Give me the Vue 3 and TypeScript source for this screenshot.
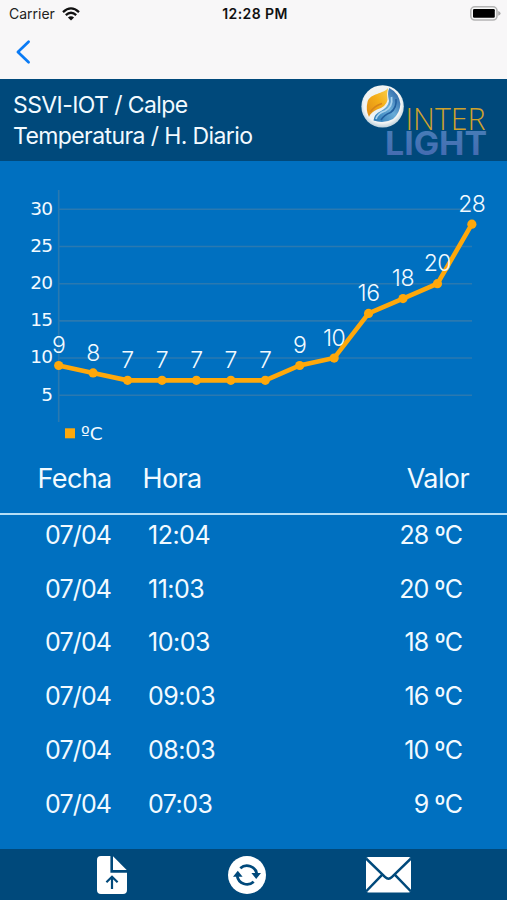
<script setup lang="ts">
interface Reading {
  date: string
  time: string
  value: number
}

const series: number[] = [9, 8, 7, 7, 7, 7, 7, 9, 10, 16, 18, 20, 28]
const ticks: number[] = [30, 25, 20, 15, 10, 5]

const left = 58.7
const step = 34.43
const px = (i: number): number => left + i * step
const py = (v: number): number => 271.4 - v * 7.436
const line: string = series.map((v, i) => `${px(i)},${py(v)}`).join(' ')

const readings: Reading[] = [
  { date: '07/04', time: '12:04', value: 28 },
  { date: '07/04', time: '11:03', value: 20 },
  { date: '07/04', time: '10:03', value: 18 },
  { date: '07/04', time: '09:03', value: 16 },
  { date: '07/04', time: '08:03', value: 10 },
  { date: '07/04', time: '07:03', value: 9 },
]
</script>

<template>
  <div class="screen">
    <div class="top">
      <div class="status">
        <div class="carrier">
          <span>Carrier</span>
          <svg class="wifi" width="18" height="14" viewBox="0 0 18 14">
            <path d="M1 5.1Q9-2.4 17 5.1" />
            <path d="M3.8 8.1Q9 3.3 14.2 8.1" />
            <path class="dot" d="M9 13.6L5.9 10.5Q9 7.9 12.1 10.5Z" />
          </svg>
        </div>
        <span class="clock">12:28 PM</span>
        <svg class="battery" width="31" height="15" viewBox="0 0 31 15">
          <rect x=".8" y=".8" width="26.2" height="13.2" rx="4" fill="#f8f8f8" stroke="#b4b4b4" stroke-width="1.6" />
          <rect x="3" y="3" width="21.8" height="8.8" rx="1.2" fill="#000" />
          <path d="M28.2 5Q30.6 6 30.6 7.4T28.2 9.8Z" fill="#aaa" />
        </svg>
      </div>
      <nav class="nav">
        <svg width="16" height="26" viewBox="0 0 16 26">
          <path d="M13.6 2.7L2.9 13L13.6 23.3" fill="none" stroke="#0a7bf5" stroke-width="2.7" stroke-linecap="round" stroke-linejoin="round" />
        </svg>
      </nav>
    </div>

    <header class="header">
      <div class="titles">
        <div>SSVI-IOT / Calpe</div>
        <div>Temperatura / H. Diario</div>
      </div>
      <svg class="logo" width="130" height="80" viewBox="0 0 130 80">
        <defs>
          <radialGradient id="ball" cx=".5" cy=".45" r=".55">
            <stop offset="0" stop-color="#e4edf2" />
            <stop offset=".8" stop-color="#f3f5f4" />
            <stop offset="1" stop-color="#b9cfdb" />
          </radialGradient>
          <linearGradient id="flame" x1="0" y1="1" x2="1" y2="0">
            <stop offset="0" stop-color="#df8b16" />
            <stop offset=".55" stop-color="#f4ae18" />
            <stop offset="1" stop-color="#f9cf4a" />
          </linearGradient>
          <linearGradient id="wave" x1="0" y1="1" x2="1" y2="0">
            <stop offset="0" stop-color="#2878b5" />
            <stop offset=".5" stop-color="#69abd7" />
            <stop offset="1" stop-color="#1f579c" />
          </linearGradient>
          <linearGradient id="steel" x1="0" y1="0" x2="0" y2="1">
            <stop offset="0" stop-color="#4880b8" />
            <stop offset="1" stop-color="#4467b0" />
          </linearGradient>
        </defs>
        <circle cx="25.6" cy="27.4" r="21.2" fill="url(#ball)" />
        <path d="M31 9C27 15 13 14 10.5 23Q8.5 31 12 38Q14 33 20 30.5Q29 28 30.5 21Q29.5 14 31 9Z" fill="url(#flame)" />
        <path d="M16.5 41.5Q17 35 24 32Q31 28 32 22Q30 14 32.3 9Q42 14 43.4 25Q43 34 36 40Q27 45 16.5 41.5Z" fill="url(#wave)" />
        <path d="M19 40Q21 34 28 32Q36 28 34.5 18" fill="none" stroke="#a9d3ee" stroke-width="1.8" />
        <path d="M24 41Q27 36 33.5 33.5Q40 29 39 20" fill="none" stroke="#215f9f" stroke-width="1.6" />
        <path d="M13.5 33Q17 27 25 24.5" fill="none" stroke="#d8841a" stroke-width="1.6" />
        <text class="inter" x="48.5" y="51" textLength="80" lengthAdjust="spacingAndGlyphs">INTER</text>
        <text class="light" x="28" y="76" textLength="102" lengthAdjust="spacingAndGlyphs">LIGHT</text>
      </svg>
    </header>

    <section class="chart">
      <svg width="507" height="290" viewBox="0 0 507 290">
        <g class="grid">
          <line :x1="left" :x2="left" y1="29" y2="261" />
          <line v-for="t in ticks" :key="t" :x1="left" x2="472" :y1="py(t)" :y2="py(t)" />
        </g>
        <text v-for="t in ticks" :key="t" class="tick" x="52.3" :y="py(t) + 5.4">{{ t }}</text>
        <polyline class="line" :points="line" />
        <circle v-for="(v, i) in series" :key="i" class="point" :cx="px(i)" :cy="py(v)" r="4.6" />
        <text v-for="(v, i) in series" :key="i" class="label" :x="px(i)" :y="py(v) - 12.4">{{ v }}</text>
        <rect x="65" y="267.3" width="10" height="10" fill="#ffa80a" />
        <text class="legend" x="81" y="279.4">ºC</text>
      </svg>
    </section>

    <div class="row head">
      <span>Fecha</span><span>Hora</span><span>Valor</span>
    </div>
    <main class="list">
      <div v-for="r in readings" :key="r.time" class="row">
        <span class="date">{{ r.date }}</span><span class="time">{{ r.time }}</span><span class="value">{{ r.value }} ºC</span>
      </div>
    </main>

    <footer class="footer">
      <svg class="file" width="30" height="38" viewBox="0 0 30 38">
        <path d="M4 0H13.4V16.7H30V34Q30 38 26 38H4Q0 38 0 34V4Q0 0 4 0Z" fill="#fff" />
        <path d="M16 0.2L29.7 14.1H16Z" fill="#fff" />
        <path d="M15 33V21.2M9.4 26.2L15 20.7L20.6 26.2" fill="none" stroke="#00497b" stroke-width="2.2" />
      </svg>
      <svg class="sync" width="38" height="38" viewBox="0 0 38 38">
        <circle cx="19" cy="19" r="19" fill="#fff" />
        <path d="M12.3 12.2A10 10 0 0 1 28.8 18M25.7 25.8A10 10 0 0 1 9.2 20" fill="none" stroke="#00497b" stroke-width="2.8" />
        <path d="M23.4 17.1H33L28.2 23.1ZM5 20.7L9.8 14.7L14.6 20.7Z" fill="#00497b" />
      </svg>
      <svg class="mail" width="45" height="36" viewBox="0 0 45 36">
        <rect width="45" height="35.5" rx="2.5" fill="#fff" />
        <path d="M0 1.5L19.2 20.2Q22.5 23.3 25.8 20.2L45 1.5M0 34.5L15.8 18.2M45 34.5L29.2 18.2" fill="none" stroke="#00497b" stroke-width="2.5" />
      </svg>
    </footer>
  </div>
</template>

<style>
body {
  margin: 0;
}
</style>

<style scoped>
.screen {
  display: flex;
  flex-direction: column;
  width: 507px;
  height: 900px;
  overflow: hidden;
  background: #0070c0;
  color: #f2faff;
  font-family: Inter, "Liberation Sans", sans-serif;
}
.top {
  flex: none;
  box-sizing: border-box;
  height: 79px;
  background: #f8f7f8;
}
.status {
  display: grid;
  grid-template-columns: 1fr auto 1fr;
  align-items: center;
  height: 27px;
  padding: 0 6px 0 9px;
  color: #222;
  font-size: 14px;
}
.carrier {
  display: flex;
  align-items: center;
  gap: 7px;
}
.wifi path {
  fill: none;
  stroke: #111;
  stroke-width: 2.3;
}
.wifi .dot {
  fill: #111;
  stroke: none;
}
.clock {
  font-weight: 600;
  letter-spacing: 0.4px;
  color: #111;
}
.battery {
  justify-self: end;
}
.nav {
  display: flex;
  padding: 12px 0 0 15px;
}
.header {
  flex: none;
  display: flex;
  justify-content: space-between;
  height: 82px;
  background: #00497b;
}
.titles {
  padding: 11px 0 0 13px;
  font-size: 23px;
  line-height: 30.5px;
  letter-spacing: -0.6px;
  white-space: nowrap;
}
.logo {
  margin-right: 20px;
  overflow: visible;
}
.inter {
  font: 300 30.5px "Open Sans", Inter, sans-serif;
  fill: #cfa22c;
}
.light {
  font: 700 32px Inter, sans-serif;
  fill: url(#steel);
}
.chart {
  flex: none;
  height: 290px;
}
.chart svg {
  display: block;
}
.grid line {
  stroke: #2a79b0;
  stroke-width: 1.6;
}
.tick,
.legend {
  font: 18.5px "DejaVu Sans", sans-serif;
  fill: #f2faff;
}
.tick {
  text-anchor: end;
  letter-spacing: -0.7px;
}
.line {
  fill: none;
  stroke: #ffa80a;
  stroke-width: 4.6;
}
.point {
  fill: #ffa80a;
}
.label {
  font: 300 23px Inter, sans-serif;
  letter-spacing: -0.4px;
  text-anchor: middle;
  fill: #f2faff;
}
.row {
  display: grid;
  grid-template-columns: 103px 1fr auto;
  align-items: center;
  height: 53.8px;
  padding: 0 45px;
  font-size: 25px;
}
.date {
  letter-spacing: -0.85px;
}
.time {
  letter-spacing: -0.5px;
}
.value {
  letter-spacing: -0.95px;
}
.head {
  flex: none;
  grid-template-columns: 105px 1fr auto;
  box-sizing: border-box;
  height: 64px;
  padding: 0 38px 8px 37.5px;
  border-bottom: 2px solid #b5def6;
  font-size: 27px;
  letter-spacing: -0.6px;
}
.list {
  flex: 1;
  margin-top: -7px;
}
.footer {
  flex: none;
  display: flex;
  align-items: center;
  box-sizing: border-box;
  height: 51px;
  padding-left: 97px;
  background: #00497b;
}
.sync {
  margin-left: 101px;
}
.mail {
  margin-left: 100px;
}
</style>
